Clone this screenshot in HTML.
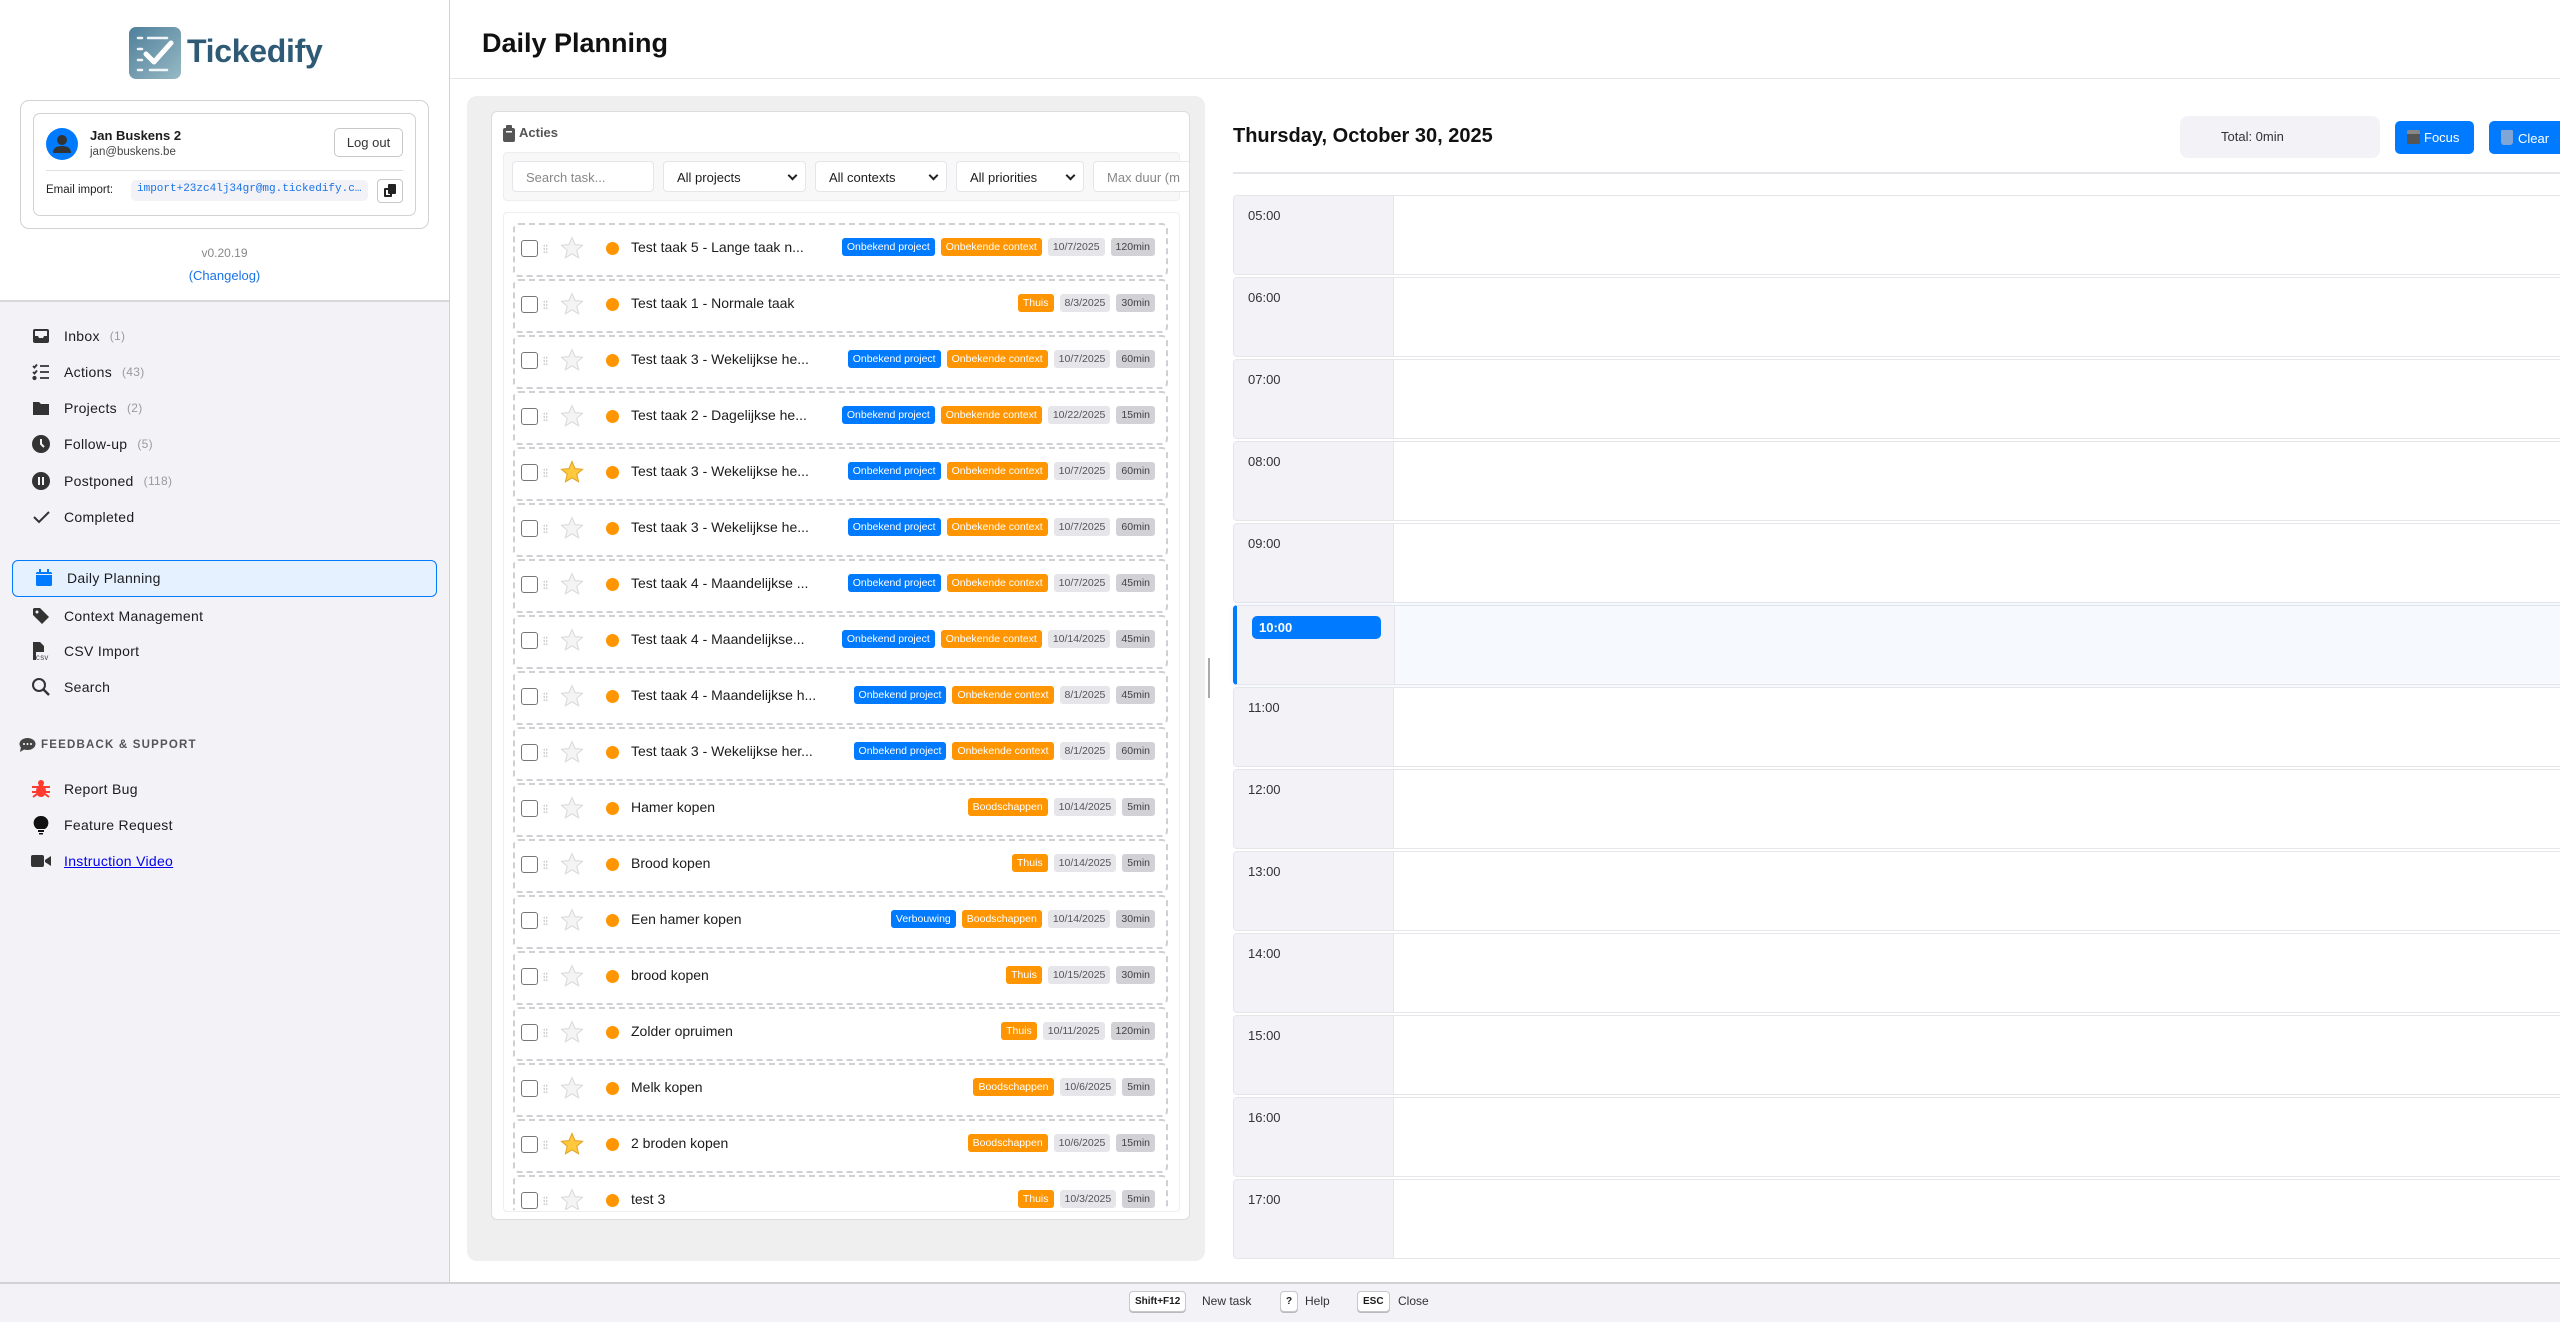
<!DOCTYPE html>
<html><head><meta charset="utf-8"><style>
*{box-sizing:border-box;margin:0;padding:0}
body{width:2560px;height:1322px;overflow:hidden;font-family:"Liberation Sans",Arial,sans-serif;background:#fff;position:relative;color:#1c1c1e}
.abs{position:absolute}
#side{left:0;top:0;width:450px;height:1282px;background:#f2f2f7;border-right:1px solid #d1d1d6}
#sidetop{left:0;top:0;width:449px;height:302px;background:#fff;border-bottom:2px solid #d8d8dc}
.nav{position:absolute;left:31px;height:24px;display:flex;align-items:center;font-size:14px;letter-spacing:.3px;color:#1c1c1e}
.nav svg{width:20px;height:20px;margin-right:13px}
.nav .c{color:#9a9a9f;font-size:12px;margin-left:10px}
.row{position:absolute;left:513px;width:655px;height:54px;border:2px dashed #d0d0d4;border-radius:6px;background:#fff;display:flex;align-items:center}
.cb{position:absolute;left:6px;top:15px;width:17px;height:17px;border:1.5px solid #777;border-radius:3px}
.dots{position:absolute;left:28px;top:19px;width:5px;height:10px;background-image:radial-gradient(#ccc 40%,transparent 45%);background-size:2.5px 3.3px}
.star{position:absolute;left:45px;top:11px}
.dot{position:absolute;left:91px;top:17px;width:13px;height:13px;border-radius:50%;background:#ff9500}
.tt{position:absolute;left:116px;top:14px;font-size:14px;color:#1c1c1e;white-space:nowrap}
.bs{position:absolute;right:11px;top:13px;display:flex;gap:6px}
.b{height:18px;line-height:18px;font-size:10.5px;padding:0 5px;border-radius:3px;white-space:nowrap}
.bp{background:#007aff;color:#fff}.bc{background:#ff9500;color:#fff}.bd{background:#e5e5ea;color:#555}.bm{background:#d1d1d6;color:#444}
.hr{position:absolute;left:1233px;width:1340px;height:80px;border:1.5px solid #e5e5ea;border-radius:4px;background:#fff;overflow:hidden}
.hr .l{position:absolute;left:0;top:0;width:160px;height:100%;background:#f2f2f7;border-right:1px solid #e5e5ea;font-size:13px;color:#333;padding:12px 0 0 14px}
.sel{border:1px solid #e5e5ea;border-radius:4px;background:#fff;height:31px;position:absolute;top:160px;font-size:13px;padding:8px 0 0 13px;color:#1c1c1e}
.dd:after{content:"";position:absolute;right:9px;top:10px;width:5px;height:5px;border-right:2px solid #222;border-bottom:2px solid #222;transform:rotate(45deg)}
.key{position:absolute;top:1291px;border:1px solid #c7c7cc;border-radius:4px;background:#fff;font-size:10px;font-weight:bold;height:21px;line-height:19px;padding:0 5px;box-shadow:0 1px 0 #bbb}
.kt{position:absolute;top:1294px;font-size:12px;color:#333}
</style></head><body>

<div id="side" class="abs"></div>
<div id="sidetop" class="abs"></div>

<!-- logo -->
<svg class="abs" style="left:129px;top:27px" width="52" height="52" viewBox="0 0 52 52">
<defs><linearGradient id="g" x1="0" y1="0" x2="1" y2="1"><stop offset="0" stop-color="#4f7f9b"/><stop offset="1" stop-color="#97b9c4"/></linearGradient></defs>
<rect width="52" height="52" rx="7" fill="url(#g)"/>
<g stroke="#fff" stroke-width="2.5" stroke-linecap="round" opacity=".9"><line x1="9" y1="11" x2="13" y2="11"/><line x1="19" y1="11" x2="38" y2="11"/><line x1="9" y1="22" x2="13" y2="22"/><line x1="9" y1="33" x2="13" y2="33"/><line x1="9" y1="43" x2="13" y2="43"/><line x1="21" y1="43" x2="38" y2="43"/></g>
<path d="M17 27 L25 35 L42 16" stroke="#fff" stroke-width="5" fill="none" stroke-linecap="round" stroke-linejoin="round"/>
</svg>
<div class="abs" style="left:187px;top:33px;font-size:32px;font-weight:bold;color:#2f5a76;letter-spacing:-.3px">Tickedify</div>

<div class="abs" style="left:20px;top:100px;width:409px;height:129px;border:1px solid #d1d1d6;border-radius:9px"></div>
<div class="abs" style="left:33px;top:113px;width:383px;height:103px;border:1px solid #d1d1d6;border-radius:7px"></div>
<svg class="abs" style="left:46px;top:128px" width="32" height="32" viewBox="0 0 32 32"><circle cx="16" cy="16" r="16" fill="#007aff"/><circle cx="16" cy="12" r="5" fill="#333"/><path d="M7 25 Q7 18 16 18 Q25 18 25 25 Z" fill="#333"/></svg>
<div class="abs" style="left:90px;top:128px;font-size:13px;font-weight:bold">Jan Buskens 2</div>
<div class="abs" style="left:90px;top:146px;font-size:11.5px;color:#444">jan@buskens.be</div>
<div class="abs" style="left:334px;top:128px;width:69px;height:29px;border:1px solid #c7c7cc;border-radius:5px;font-size:13px;text-align:center;line-height:27px;color:#333">Log out</div>
<div class="abs" style="left:46px;top:170px;width:357px;height:1px;background:#e0e0e4"></div>
<div class="abs" style="left:46px;top:184px;font-size:11.5px;color:#222">Email import:</div>
<div class="abs" style="left:131px;top:180px;width:237px;height:21px;background:#f2f2f7;border-radius:5px;font-family:'Liberation Mono',monospace;font-size:11px;color:#1a73e8;padding:3px 0 0 6px;white-space:nowrap;overflow:hidden">import+23zc4lj34gr@mg.tickedify.c…</div>
<div class="abs" style="left:377px;top:179px;width:26px;height:24px;border:1px solid #c7c7cc;border-radius:4px"><div class="abs" style="left:6px;top:8px;width:8px;height:9px;border:2px solid #222;border-radius:1px"></div><div class="abs" style="left:10px;top:4px;width:8px;height:10px;background:#222;border-radius:1px"></div></div>
<div class="abs" style="left:0;width:449px;top:246px;text-align:center;font-size:12px;color:#888">v0.20.19</div>
<div class="abs" style="left:0;width:449px;top:268px;text-align:center;font-size:13px;color:#1a73e8">(Changelog)</div>

<!-- nav -->
<div class="nav" style="top:324px"><svg viewBox="0 0 20 20"><path d="M2 5 Q2 3 4 3 H16 Q18 3 18 5 V15 Q18 17 16 17 H4 Q2 17 2 15 Z" fill="#333"/><path d="M4 10 H7 L8 12 H12 L13 10 H16 V5 H4 Z" fill="#f2f2f7"/></svg>Inbox<span class="c">(1)</span></div>
<div class="nav" style="top:360px"><svg viewBox="0 0 20 20" stroke="#333" stroke-width="1.8" fill="none"><path d="M2 4 L3.5 5.5 L6 2.5 M2 10 L3.5 11.5 L6 8.5"/><circle cx="3.5" cy="16" r="1.2" fill="#333"/><path d="M9 4 H18 M9 10 H18 M9 16 H18"/></svg>Actions<span class="c">(43)</span></div>
<div class="nav" style="top:396px"><svg viewBox="0 0 20 20"><path d="M2 4 H8 L10 6 H18 V17 H2 Z" fill="#333"/></svg>Projects<span class="c">(2)</span></div>
<div class="nav" style="top:432px"><svg viewBox="0 0 20 20"><circle cx="10" cy="10" r="9" fill="#333"/><path d="M10 5 V10 L13 13" stroke="#f2f2f7" stroke-width="2" fill="none"/></svg>Follow-up<span class="c">(5)</span></div>
<div class="nav" style="top:469px"><svg viewBox="0 0 20 20"><circle cx="10" cy="10" r="9" fill="#333"/><rect x="7" y="6" width="2" height="8" fill="#f2f2f7"/><rect x="11" y="6" width="2" height="8" fill="#f2f2f7"/></svg>Postponed<span class="c">(118)</span></div>
<div class="nav" style="top:505px"><svg viewBox="0 0 20 20"><path d="M3 10 L8 15 L18 5" stroke="#333" stroke-width="2" fill="none"/></svg>Completed</div>
<div class="abs" style="left:12px;top:560px;width:425px;height:37px;border:1.5px solid #007aff;border-radius:6px;background:#e5f1ff"></div>
<div class="nav" style="top:566px;left:34px"><svg viewBox="0 0 20 20"><rect x="2" y="4" width="16" height="14" rx="1.5" fill="#007aff"/><rect x="5" y="1" width="2" height="4" fill="#007aff"/><rect x="13" y="1" width="2" height="4" fill="#007aff"/><rect x="2" y="6" width="16" height="1" fill="#e5f1ff"/></svg>Daily Planning</div>
<div class="nav" style="top:604px"><svg viewBox="0 0 20 20"><path d="M2 3 V9 L11 18 L18 11 L9 2 H3 Z" fill="#333"/><circle cx="6" cy="6" r="1.5" fill="#f2f2f7"/></svg>Context Management</div>
<div class="nav" style="top:639px"><svg viewBox="0 0 20 20"><path d="M2 1 H9 L13 5 V11 H5 V19 H2 Z" fill="#333"/><text x="5" y="19" font-size="6.5" font-family="Liberation Mono" fill="#333">CSV</text></svg>CSV Import</div>
<div class="nav" style="top:675px"><svg viewBox="0 0 20 20"><circle cx="8" cy="8" r="6" stroke="#333" stroke-width="2" fill="none"/><path d="M12.5 12.5 L18 18" stroke="#333" stroke-width="2.4"/></svg>Search</div>
<div class="abs" style="left:19px;top:737px;font-size:11.5px;font-weight:bold;letter-spacing:1.2px;color:#555;display:flex;align-items:center"><svg width="17" height="15" viewBox="0 0 17 15" style="margin-right:5px"><ellipse cx="8.5" cy="7" rx="8" ry="6" fill="#444"/><path d="M2 10 L1 15 L6 12Z" fill="#444"/><circle cx="5" cy="7" r="1" fill="#fff"/><circle cx="8.5" cy="7" r="1" fill="#fff"/><circle cx="12" cy="7" r="1" fill="#fff"/></svg>FEEDBACK &amp; SUPPORT</div>
<div class="nav" style="top:777px"><svg viewBox="0 0 20 20" fill="#ff3b30"><ellipse cx="10" cy="12" rx="5" ry="6"/><circle cx="10" cy="4" r="3"/><path d="M1 8 H19 M1 13 H19 M2 18 L6 15 M18 18 L14 15" stroke="#ff3b30" stroke-width="2"/></svg>Report Bug</div>
<div class="nav" style="top:813px"><svg viewBox="0 0 20 20" fill="#111"><path d="M10 1 A7 7 0 0 1 14 14 H6 A7 7 0 0 1 10 1Z"/><rect x="7" y="15" width="6" height="2"/><rect x="8" y="18" width="4" height="1.5"/></svg>Feature Request</div>
<div class="nav" style="top:849px"><svg viewBox="0 0 20 20" fill="#333"><rect x="0" y="4" width="13" height="12" rx="2"/><path d="M14 9 L20 5 V15 L14 11Z"/></svg><span style="color:#0000ee;text-decoration:underline">Instruction Video</span></div>

<!-- header -->
<div class="abs" style="left:450px;top:0;width:2110px;height:79px;border-bottom:1px solid #e5e5ea"></div>
<div class="abs" style="left:482px;top:28px;font-size:27px;font-weight:bold;color:#111">Daily Planning</div>

<!-- left panel -->
<div class="abs" style="left:467px;top:96px;width:738px;height:1165px;background:#efefef;border-radius:10px"></div>
<div class="abs" style="left:491px;top:111px;width:699px;height:1109px;background:#fff;border:1px solid #ddd;border-radius:6px;overflow:hidden">
  <svg class="abs" style="left:11px;top:13px" width="12" height="17" viewBox="0 0 12 17"><rect x="0" y="3" width="12" height="14" rx="2" fill="#555"/><rect x="3" y="0" width="6" height="4" rx="1" fill="#555"/><rect x="3" y="6" width="6" height="1.5" fill="#fff"/></svg>
  <div class="abs" style="left:27px;top:13px;font-size:13px;font-weight:bold;color:#555">Acties</div>
  <div class="abs" style="left:11px;top:40px;width:677px;height:49px;background:#f8f8f8;border:1px solid #eee;border-radius:4px"></div>
  <div class="sel" style="left:20px;top:49px;width:142px;color:#888">Search task...</div>
  <div class="sel dd" style="left:171px;top:49px;width:143px">All projects</div>
  <div class="sel dd" style="left:323px;top:49px;width:132px">All contexts</div>
  <div class="sel dd" style="left:464px;top:49px;width:128px">All priorities</div>
  <div class="sel" style="left:601px;top:49px;width:120px;color:#888">Max duur (m</div>
  <div class="abs" style="left:11px;top:100px;width:677px;height:1000px;border:1px solid #eee;border-radius:4px"></div>
</div>
<div class="abs" style="left:491px;top:223px;width:699px;height:987px;overflow:hidden" id="list"></div>

<div class="abs" style="left:1208px;top:658px;width:2px;height:40px;background:#aaa"></div>

<!-- right -->
<div class="abs" style="left:1233px;top:125px;font-size:20px;font-weight:bold;color:#111">Thursday, October 30, 2025</div>
<div class="abs" style="left:2180px;top:116px;width:200px;height:42px;background:#f2f2f7;border-radius:8px;font-size:13px;color:#333;padding:13px 0 0 41px">Total: 0min</div>
<div class="abs" style="left:2395px;top:121px;width:79px;height:33px;background:#007aff;border-radius:5px;color:#fff;font-size:13px;padding:9px 0 0 12px"><span style="display:inline-block;width:13px;height:14px;background:#555;border-radius:2px;vertical-align:-2px;margin-right:4px;border-top:4px solid #888"></span>Focus</div>
<div class="abs" style="left:2489px;top:121px;width:90px;height:33px;background:#007aff;border-radius:5px;color:#fff;font-size:13px;padding:9px 0 0 12px"><span style="display:inline-block;width:12px;height:15px;background:#7fa6d6;border-radius:1px 1px 3px 3px;vertical-align:-2px;margin-right:5px"></span>Clear</div>
<div class="abs" style="left:1233px;top:172px;width:1330px;height:2px;background:#e5e5ea"></div>
<div id="hours"></div>

<!-- footer -->
<div class="abs" style="left:0;top:1282px;width:2560px;height:40px;background:#f2f2f7;border-top:2px solid #d1d1d6"></div>
<span class="key" style="left:1129px">Shift+F12</span><span class="kt" style="left:1202px">New task</span>
<span class="key" style="left:1280px">?</span><span class="kt" style="left:1305px">Help</span>
<span class="key" style="left:1357px">ESC</span><span class="kt" style="left:1398px">Close</span>

<script>
var OP='<span class="b bp">Onbekend project</span>',OC='<span class="b bc">Onbekende context</span>';
function c(t){return '<span class="b bc">'+t+'</span>'}
var T=[["Test taak 5 - Lange taak n...",OP+OC,"10/7/2025","120min"],
["Test taak 1 - Normale taak",c("Thuis"),"8/3/2025","30min"],
["Test taak 3 - Wekelijkse he...",OP+OC,"10/7/2025","60min"],
["Test taak 2 - Dagelijkse he...",OP+OC,"10/22/2025","15min"],
["Test taak 3 - Wekelijkse he...",OP+OC,"10/7/2025","60min",1],
["Test taak 3 - Wekelijkse he...",OP+OC,"10/7/2025","60min"],
["Test taak 4 - Maandelijkse ...",OP+OC,"10/7/2025","45min"],
["Test taak 4 - Maandelijkse...",OP+OC,"10/14/2025","45min"],
["Test taak 4 - Maandelijkse h...",OP+OC,"8/1/2025","45min"],
["Test taak 3 - Wekelijkse her...",OP+OC,"8/1/2025","60min"],
["Hamer kopen",c("Boodschappen"),"10/14/2025","5min"],
["Brood kopen",c("Thuis"),"10/14/2025","5min"],
["Een hamer kopen",'<span class="b bp">Verbouwing</span>'+c("Boodschappen"),"10/14/2025","30min"],
["brood kopen",c("Thuis"),"10/15/2025","30min"],
["Zolder opruimen",c("Thuis"),"10/11/2025","120min"],
["Melk kopen",c("Boodschappen"),"10/6/2025","5min"],
["2 broden kopen",c("Boodschappen"),"10/6/2025","15min",1],
["test 3",c("Thuis"),"10/3/2025","5min"]];
var h='';
T.forEach(function(r,i){
 var gold=r[4];
 var st='<svg class="star" width="24" height="24" viewBox="0 0 24 24"><path d="M12 1.5 L15 8.6 L22.6 9.3 L16.8 14.3 L18.6 21.8 L12 17.8 L5.4 21.8 L7.2 14.3 L1.4 9.3 L9 8.6 Z" fill="'+(gold?'#ffc83d':'#f4f4f4')+'" stroke="'+(gold?'#e0a020':'#d8d8d8')+'" stroke-width="1"/></svg>';
 h+='<div class="row" style="left:22px;top:'+(i*56)+'px"><div class="cb"></div><div class="dots"></div>'+st+'<div class="dot"></div><div class="tt">'+r[0]+'</div><div class="bs">'+r[1]+'<span class="b bd">'+r[2]+'</span><span class="b bm">'+r[3]+'</span></div></div>';
});
document.getElementById('list').innerHTML=h;
var H='';
for(var k=0;k<13;k++){
 var hh=(5+k<10?'0':'')+(5+k)+':00',ty=195+k*82;
 if(5+k==10){
  H+='<div class="hr" style="top:'+ty+'px;border-left:4px solid #007aff;background:#f6f9fe;box-shadow:0 0 4px rgba(0,122,255,.12)"><div class="l" style="width:158px;padding:10px 0 0 15px"><div style="width:129px;height:23px;background:#007aff;border-radius:5px;color:#fff;font-weight:bold;font-size:13px;padding:4px 0 0 7px">10:00</div></div></div>';
 } else H+='<div class="hr" style="top:'+ty+'px"><div class="l">'+hh+'</div></div>';
}
document.getElementById('hours').innerHTML=H;
</script>
</body></html>
